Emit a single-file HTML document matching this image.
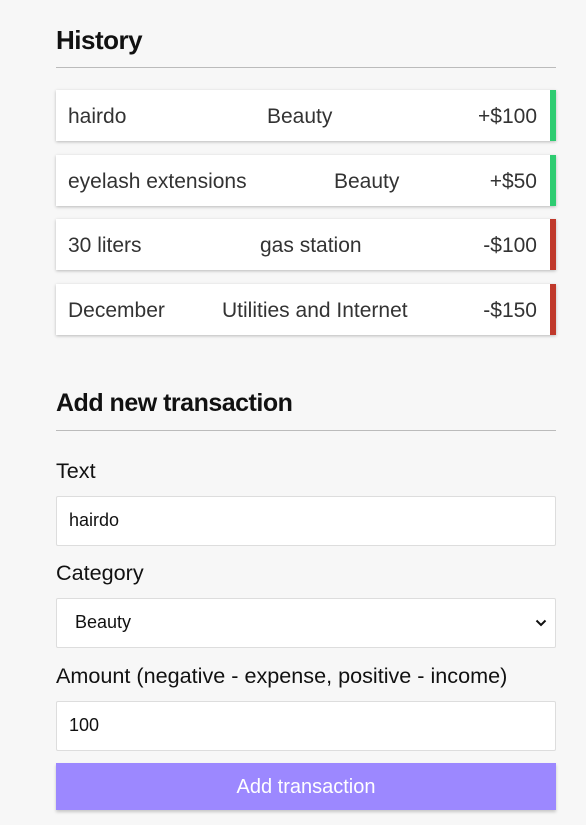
<!DOCTYPE html>
<html><head><meta charset="utf-8"><style>
*{box-sizing:border-box;margin:0;padding:0}
body{width:586px;height:825px;background:#f7f7f7;font-family:"Liberation Sans",sans-serif;position:relative;overflow:hidden;color:#111}
.a{position:absolute}
h3{position:absolute;left:56px;font-weight:bold;letter-spacing:-0.5px;color:#111}
.hr{position:absolute;left:56px;width:500px;height:1px;background:#bbb}
.item{position:absolute;left:56px;width:500px;height:51px;background:#fff;box-shadow:0 1px 3px rgba(0,0,0,.25);font-size:21px;color:#333}
.item span{position:absolute;top:15px;white-space:nowrap}
.item .r{right:19px}
.item .b{position:absolute;right:0;top:0;width:6px;height:100%}
.g{background:#2ecc71}.red{background:#c0392b}
.lbl{position:absolute;left:56px;font-size:21.6px;color:#111}
.in{position:absolute;left:56px;width:500px;height:50px;background:#fff;border:1px solid #ddd;border-radius:2px;font-size:18px;padding:13px 12px}
.btn{position:absolute;left:56px;top:763px;width:500px;height:47px;background:#9c88ff;color:#fff;font-size:20px;text-align:center;line-height:48px;box-shadow:0 2px 3px rgba(0,0,0,.2)}
</style></head><body>
<h3 style="top:25px;font-size:26px">History</h3>
<div class="hr" style="top:67px"></div>
<div class="item" style="top:90px"><span style="left:12px">hairdo</span><span style="left:211px">Beauty</span><span class="r">+$100</span><div class="b g"></div></div>
<div class="item" style="top:155px"><span style="left:12px">eyelash extensions</span><span style="left:278px">Beauty</span><span class="r">+$50</span><div class="b g"></div></div>
<div class="item" style="top:219px"><span style="left:12px">30 liters</span><span style="left:204px">gas station</span><span class="r">-$100</span><div class="b red"></div></div>
<div class="item" style="top:284px"><span style="left:12px">December</span><span style="left:166px">Utilities and Internet</span><span class="r">-$150</span><div class="b red"></div></div>
<h3 style="top:389px;font-size:25px">Add new transaction</h3>
<div class="hr" style="top:430px"></div>
<div class="lbl" style="top:458px">Text</div>
<div class="in" style="top:496px">hairdo</div>
<div class="lbl" style="top:560px">Category</div>
<div class="in" style="top:598px;padding-left:18px">Beauty
<svg class="a" style="right:8px;top:20px" width="12" height="8" viewBox="0 0 12 8"><path d="M1.5 1.5L6 6L10.5 1.5" stroke="#111" stroke-width="2" fill="none"/></svg></div>
<div class="lbl" style="top:663px">Amount (negative - expense, positive - income)</div>
<div class="in" style="top:701px">100</div>
<div class="btn">Add transaction</div>
</body></html>
